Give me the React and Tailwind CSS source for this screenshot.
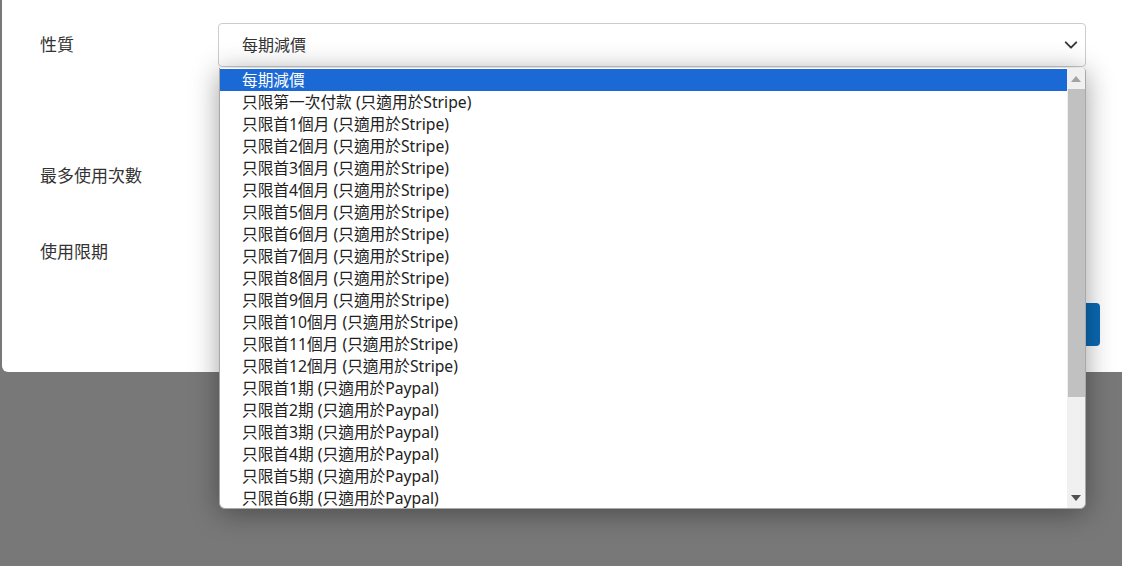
import React from "react";

const options = [
  "每期減價",
  "只限第一次付款 (只適用於Stripe)",
  ...Array.from({ length: 12 }, (_, i) => `只限首${i + 1}個月 (只適用於Stripe)`),
  ...Array.from({ length: 6 }, (_, i) => `只限首${i + 1}期 (只適用於Paypal)`),
];

function Row({ label, top, children }) {
  return (
    <div className="flex items-center h-[44px]" style={{ marginTop: top }}>
      <div className="w-[216px] pl-[38px] text-[17px] text-[#333]">{label}</div>
      {children}
    </div>
  );
}

export default function App() {
  return (
    <div
      className="relative w-[1122px] h-[566px] overflow-hidden bg-[#787878]"
      style={{ fontFamily: '"Noto Sans", "Noto Sans CJK TC", sans-serif' }}
    >
      <div className="ml-[2px] h-[372px] bg-white rounded-bl-[6px] pr-[22px] pt-[23px]">
        <Row label="性質" top={0}>
          <div className="flex-1 h-[44px] border border-[#ccc] rounded-[4px] flex items-center justify-between pl-[23px] pr-[7px] text-[16px] text-[#333]">
            <span>每期減價</span>
            <svg width="14" height="14" viewBox="0 0 16 16" fill="none">
              <path d="M2 5l6 6 6-6" stroke="#343a40" strokeWidth="2.2" strokeLinecap="round" strokeLinejoin="round" />
            </svg>
          </div>
          <div className="w-[14px]" />
        </Row>
        <Row label="最多使用次數" top={87}>
          <div className="flex-1 ml-[4px] h-[44px] border border-[#ccc] rounded-[4px]" />
          <div className="w-[14px]" />
        </Row>
        <Row label="使用限期" top={32}>
          <div className="flex-1 ml-[4px] h-[44px] border border-[#ccc] rounded-[4px]" />
          <div className="w-[14px]" />
        </Row>
        <div className="flex justify-end mt-[29px]">
          <div className="w-[90px] h-[43px] rounded-[4px] bg-[#0a6ab4]" />
        </div>
      </div>

      {/* open select listbox */}
      <div className="absolute left-[219px] top-[68px] w-[867px] h-[441px] bg-white border border-t-0 border-[#a8a8a8] rounded-b-[6px] rounded-tr-[4px] shadow-[0_4px_28px_rgba(0,0,0,0.38)] overflow-hidden flex text-[15.7px] text-[#222]">
        <div className="flex-1 overflow-hidden pt-[1px]">
          {options.map((o, i) => (
            <div
              key={o}
              className={
                "h-[22px] leading-[22px] pl-[22px] whitespace-nowrap " +
                (i === 0 ? "bg-[#1a69d4] text-white" : "")
              }
            >
              {o}
            </div>
          ))}
        </div>
        <div className="w-[18px] bg-[#f0f0f0] flex flex-col items-center pt-[1px]">
          <div className="h-[20px] flex items-center justify-center">
            <svg width="10" height="6" viewBox="0 0 10 6">
              <path d="M0 6L5 0l5 6z" fill="#a3a3a3" />
            </svg>
          </div>
          <div className="w-[17px] h-[308px] bg-[#c1c1c1]" />
          <div className="flex-1" />
          <div className="h-[20px] flex items-center justify-center">
            <svg width="10" height="6" viewBox="0 0 10 6">
              <path d="M0 0h10L5 6z" fill="#505050" />
            </svg>
          </div>
        </div>
      </div>
    </div>
  );
}
